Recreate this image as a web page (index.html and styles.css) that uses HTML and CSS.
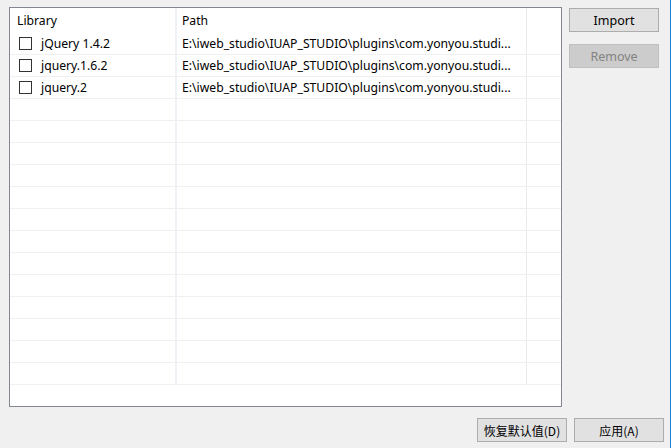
FILE: index.html
```html
<!DOCTYPE html>
<html>
<head>
<meta charset="utf-8">
<link rel="stylesheet" href="styles.css">
</head>
<body>
<div class="window">
  <div class="main">
    <div class="table">
      <div class="row head">
        <div class="cell c1"><span class="htext">Library</span></div>
        <div class="cell c2"><span class="ptext">Path</span></div>
        <div class="cell c3"></div>
      </div>
      <div class="row">
        <div class="cell c1"><span class="cb"></span><span class="name">jQuery 1.4.2</span></div>
        <div class="cell c2"><span class="ptext">E:\iweb_studio\IUAP_STUDIO\plugins\com.yonyou.studi...</span></div>
        <div class="cell c3"></div>
      </div>
      <div class="row">
        <div class="cell c1"><span class="cb"></span><span class="name">jquery.1.6.2</span></div>
        <div class="cell c2"><span class="ptext">E:\iweb_studio\IUAP_STUDIO\plugins\com.yonyou.studi...</span></div>
        <div class="cell c3"></div>
      </div>
      <div class="row">
        <div class="cell c1"><span class="cb"></span><span class="name">jquery.2</span></div>
        <div class="cell c2"><span class="ptext">E:\iweb_studio\IUAP_STUDIO\plugins\com.yonyou.studi...</span></div>
        <div class="cell c3"></div>
      </div>
      <div class="row"><div class="cell c1"></div><div class="cell c2"></div><div class="cell c3"></div></div>
      <div class="row"><div class="cell c1"></div><div class="cell c2"></div><div class="cell c3"></div></div>
      <div class="row"><div class="cell c1"></div><div class="cell c2"></div><div class="cell c3"></div></div>
      <div class="row"><div class="cell c1"></div><div class="cell c2"></div><div class="cell c3"></div></div>
      <div class="row"><div class="cell c1"></div><div class="cell c2"></div><div class="cell c3"></div></div>
      <div class="row"><div class="cell c1"></div><div class="cell c2"></div><div class="cell c3"></div></div>
      <div class="row"><div class="cell c1"></div><div class="cell c2"></div><div class="cell c3"></div></div>
      <div class="row"><div class="cell c1"></div><div class="cell c2"></div><div class="cell c3"></div></div>
      <div class="row"><div class="cell c1"></div><div class="cell c2"></div><div class="cell c3"></div></div>
      <div class="row"><div class="cell c1"></div><div class="cell c2"></div><div class="cell c3"></div></div>
      <div class="row"><div class="cell c1"></div><div class="cell c2"></div><div class="cell c3"></div></div>
      <div class="row"><div class="cell c1"></div><div class="cell c2"></div><div class="cell c3"></div></div>
      <div class="row"><div class="cell c1"></div><div class="cell c2"></div><div class="cell c3"></div></div>
    </div>
    <div class="side">
      <button class="btn">Import</button>
      <button class="btn disabled">Remove</button>
    </div>
  </div>
  <div class="bottom">
    <button class="btn cjk">恢复默认值(D)</button>
    <button class="btn cjk">应用(A)</button>
  </div>
</div>
</body>
</html>
```

FILE: styles.css
```css
html, body {
  margin: 0;
  padding: 0;
  background: #f0f0f0;
}
body {
  width: 671px;
  height: 448px;
  overflow: hidden;
  font-family: "Noto Sans", "Noto Sans CJK SC", sans-serif;
  font-size: 12px;
  color: #000;
}
.window {
  box-sizing: border-box;
  width: 671px;
  height: 448px;
  border-right: 1px solid #1a83d8;
  padding: 7px 6px 0 9px;
  display: flex;
  flex-direction: column;
}
.main {
  display: flex;
  align-items: flex-start;
}
.table {
  box-sizing: border-box;
  width: 553px;
  height: 400px;
  border: 1px solid #828790;
  background: #fff;
  overflow: hidden;
  display: flex;
  flex-direction: column;
}
.row {
  display: flex;
  height: 22px;
  flex: none;
}
.row.head {
  height: 25px;
}
.cell {
  box-sizing: border-box;
  height: 100%;
  display: flex;
  align-items: center;
  white-space: nowrap;
  overflow: hidden;
  border-bottom: 1px solid #f0f0f0;
}
.row.head .cell {
  border-bottom: none;
}
.c1 {
  width: 167px;
  border-right: 2px solid #eef1f5;
  padding-left: 9px;
}
.row.head .c1 {
  padding-left: 7px;
}
.c2 {
  width: 350px;
  border-right: 1px solid #e8ecf1;
  padding-left: 5px;
}
.c3 {
  flex: 1;
}
.name,
.htext {
  font-size: 12.2px;
}
.ptext {
  font-size: 12.2px;
}
.cb {
  box-sizing: border-box;
  width: 13px;
  height: 13px;
  border: 1px solid #333;
  background: #fff;
  flex: none;
  margin-right: 9px;
}
.side {
  display: flex;
  flex-direction: column;
  gap: 12px;
  margin-left: 7px;
  padding-top: 1px;
}
.btn {
  box-sizing: border-box;
  width: 90px;
  height: 24px;
  margin: 0;
  padding: 0;
  border: 1px solid #adadad;
  background: #e1e1e1;
  font-family: "Noto Sans", "Noto Sans CJK SC", sans-serif;
  font-size: 12.5px;
  color: #000;
  text-align: center;
}
.btn.disabled {
  background: #cccccc;
  border-color: #bfbfbf;
  color: #838383;
}
.btn.cjk {
  font-family: "Noto Sans CJK SC", sans-serif;
  font-size: 12px;
}
.bottom {
  display: flex;
  justify-content: flex-end;
  gap: 7px;
  margin-top: 11px;
}
```
